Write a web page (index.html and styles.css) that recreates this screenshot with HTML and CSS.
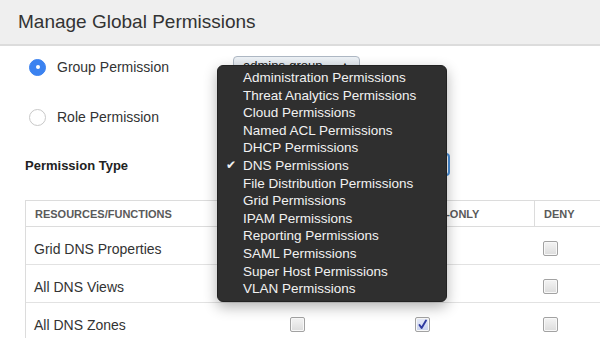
FILE: index.html
```html
<!DOCTYPE html>
<html>
<head>
<meta charset="utf-8">
<link rel="stylesheet" href="styles.css">
</head>
<body>
<div class="page">
  <div class="header"><h1 class="title">Manage Global Permissions</h1></div>
  <div class="content">
    <div class="radio-row first">
      <span class="radio checked"></span>
      <span class="radio-label">Group Permission</span>
      <span class="select small">admins-group <span class="arrow">▲</span></span>
    </div>
    <div class="radio-row second">
      <span class="radio"></span>
      <span class="radio-label">Role Permission</span>
    </div>
    <div class="type-row">
      <span class="type-label">Permission Type</span>
      <span class="select focused">DNS Permissions</span>
    </div>
    <div class="table">
      <div class="trow thead">
        <div class="cell c1">RESOURCES/FUNCTIONS</div>
        <div class="cell c2">READ/WRITE</div>
        <div class="cell c3">READ-ONLY</div>
        <div class="cell c4">DENY</div>
      </div>
      <div class="trow">
        <div class="cell c1">Grid DNS Properties</div>
        <div class="cell c2"><span class="cb"></span></div>
        <div class="cell c3"><span class="cb"></span></div>
        <div class="cell c4"><span class="cb"></span></div>
      </div>
      <div class="trow">
        <div class="cell c1">All DNS Views</div>
        <div class="cell c2"><span class="cb"></span></div>
        <div class="cell c3"><span class="cb"></span></div>
        <div class="cell c4"><span class="cb"></span></div>
      </div>
      <div class="trow">
        <div class="cell c1">All DNS Zones</div>
        <div class="cell c2"><span class="cb"></span></div>
        <div class="cell c3"><span class="cb on"><svg viewBox="0 0 15 15" width="15" height="15"><path d="M4.5 8 L6.6 11 L11 3.5" fill="none" stroke="#2f3aa0" stroke-width="1.9" stroke-linecap="round" stroke-linejoin="round"/></svg></span></div>
        <div class="cell c4"><span class="cb"></span></div>
      </div>
    </div>
  </div>
  <ul class="menu">
    <li>Administration Permissions</li>
    <li>Threat Analytics Permissions</li>
    <li>Cloud Permissions</li>
    <li>Named ACL Permissions</li>
    <li>DHCP Permissions</li>
    <li class="selected"><span class="check">✔</span>DNS Permissions</li>
    <li>File Distribution Permissions</li>
    <li>Grid Permissions</li>
    <li>IPAM Permissions</li>
    <li>Reporting Permissions</li>
    <li>SAML Permissions</li>
    <li>Super Host Permissions</li>
    <li>VLAN Permissions</li>
  </ul>
</div>
</body>
</html>
```

FILE: styles.css
```css
html, body {
  margin: 0;
  padding: 0;
  overflow: hidden;
  background: #fff;
}
body {
  font-family: "Liberation Sans", Arial, sans-serif;
  color: #333;
}
.page {
  position: relative;
  width: 680px;
  height: 338px;
}
.header {
  height: 44px;
  background: #efefef;
  border-bottom: 2px solid #dcdcdc;
  padding-left: 18px;
  display: flex;
  align-items: center;
}
.title {
  margin: 0;
  font-size: 19px;
  font-weight: normal;
  color: #333;
}
.content {
  padding-left: 25px;
}
.radio-row {
  display: flex;
  align-items: center;
  height: 42px;
  padding-left: 4px;
}
.radio-row.second {
  margin-top: 8px;
}
.radio {
  width: 17px;
  height: 17px;
  box-sizing: border-box;
  border-radius: 50%;
  border: 1px solid #c8c8c8;
  background: #fff;
  flex: none;
  position: relative;
}
.radio.checked {
  background: #3b82f0;
  border-color: #3b82f0;
}
.radio.checked::after {
  content: "";
  position: absolute;
  left: 5.5px;
  top: 5.5px;
  width: 4px;
  height: 4px;
  border-radius: 50%;
  background: #fff;
}
.radio-label {
  margin-left: 11px;
  width: 176px;
  font-size: 14px;
  flex: none;
}
.select {
  display: inline-flex;
  align-items: center;
  box-sizing: border-box;
  font-size: 13px;
  color: #222;
  border-radius: 4px;
}
.select.small {
  width: 127px;
  height: 18px;
  padding-left: 9px;
  border: 1px solid #aeb8c4;
  background: linear-gradient(#eef2f6, #d5dde6);
  margin-top: -4px;
}
.arrow {
  font-size: 9px;
  margin-left: 18px;
}
.type-row {
  display: flex;
  align-items: center;
  height: 42px;
  margin-top: 6px;
}
.type-label {
  width: 208px;
  font-size: 13px;
  font-weight: bold;
  color: #222;
  flex: none;
}
.select.focused {
  width: 217px;
  height: 23px;
  padding-left: 10px;
  border: 2px solid #4a8fd8;
  background: #fff;
  margin-top: -2px;
}
.table {
  margin-top: 14px;
  border-left: 1px solid #dcdcdc;
  border-top: 1px solid #dcdcdc;
}
.trow {
  display: grid;
  grid-template-columns: 255px 125px 128px 140px;
  height: 38px;
  padding-top: 6px;
  border-bottom: 1px solid #e2e2e2;
  box-sizing: border-box;
}
.trow.thead {
  height: 26px;
  padding-top: 0;
  border-bottom: 1px solid #dcdcdc;
}
.cell {
  display: flex;
  align-items: center;
  padding-left: 8px;
  font-size: 14px;
  color: #333;
}
.thead .cell {
  font-size: 11px;
  font-weight: bold;
  color: #5a5a5a;
  padding-left: 9px;
}
.thead .c4 {
  border-left: 1px solid #dcdcdc;
}
.trow .c2, .trow .c3, .trow .c4 {
  padding-left: 9px;
}
.thead .c1 {
  padding-left: 9px;
}
.cb {
  width: 15px;
  height: 15px;
  box-sizing: border-box;
  border: 1px solid #a2a2a2;
  border-radius: 2px;
  background: linear-gradient(#f4f4f4, #dcdcdc);
  box-shadow: inset 0 0 0 1px #f8f8f8;
  display: flex;
}
.cb svg {
  margin: -1px;
}
.cb.on {
  background: linear-gradient(#e8ecf8, #c9d2ee);
}
.menu {
  position: absolute;
  left: 217px;
  top: 65px;
  width: 230px;
  height: 237px;
  box-sizing: border-box;
  margin: 0;
  padding: 3px 0 0 25px;
  list-style: none;
  background: #2f2f2f;
  border: 1px solid #222;
  border-radius: 6px;
  box-shadow: 0 5px 14px rgba(0, 0, 0, 0.3);
}
.menu li {
  position: relative;
  font-size: 13.5px;
  line-height: 17.6px;
  color: #f2f2f2;
  white-space: nowrap;
}
.check {
  position: absolute;
  left: -17px;
  top: 0;
  font-family: "DejaVu Sans", sans-serif;
  font-size: 12px;
}
```
